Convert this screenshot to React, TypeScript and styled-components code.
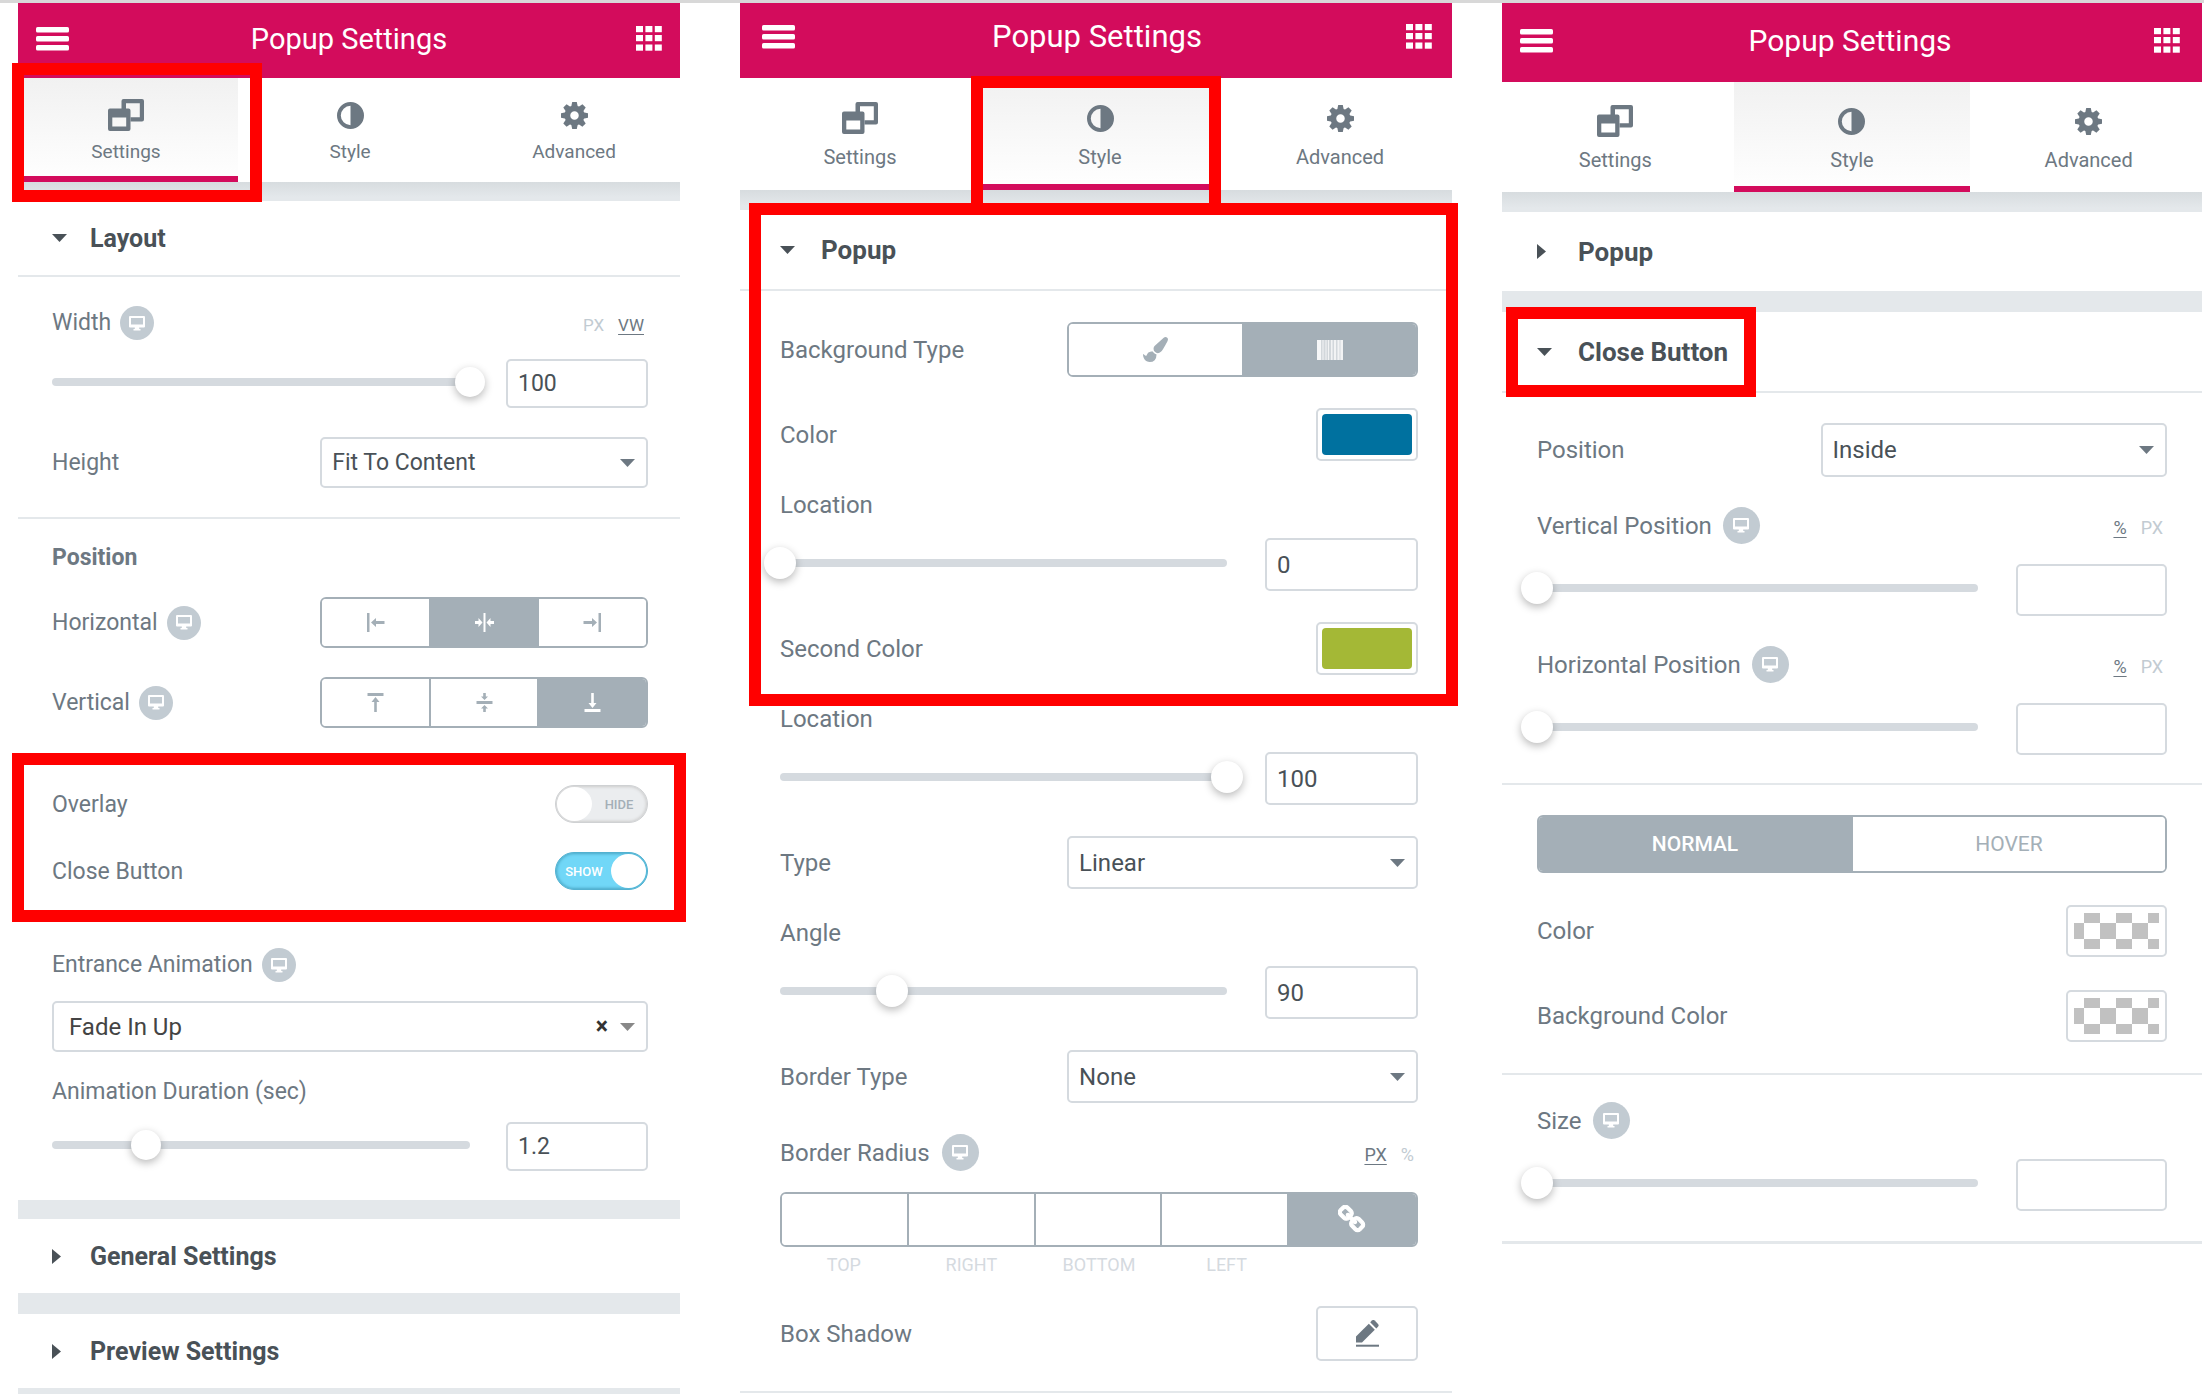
import React, { useId, useState } from 'react';
import styled, { createGlobalStyle, css, ThemeProvider } from 'styled-components';

interface Scale {
  title: number;
  tab: number;
  body: number;
  heading: number;
  unit: number;
  headerHeight: number;
  headerLift: number;
  headerLeft: number;
  headerRight: number;
  tabsHeight: number;
  tabsBleed: string;
  tabsPad: number;
  tabsGap: number;
  glyph: number;
  strip: number;
  sectionHeight: number;
  caretWidth: number;
  padLeft: number;
  padRight: number;
  control: number;
  select: number;
  segment: number;
  badge: number;
  badgeGap: number;
  label: number;
  labelGap: number;
  sliderGap: number;
  inputWidth: number;
  thumb: number;
}

declare module 'styled-components' {
  export interface DefaultTheme extends Scale {}
}

const settingsScale: Scale = {
  title: 29, tab: 19, body: 23, heading: 25, unit: 17,
  headerHeight: 75, headerLift: 4, headerLeft: 18, headerRight: 18,
  tabsHeight: 104, tabsBleed: '0 -6px 0 -4px', tabsPad: 21, tabsGap: 9, glyph: 32,
  strip: 19, sectionHeight: 74, caretWidth: 38,
  padLeft: 34, padRight: 32,
  control: 49, select: 51, segment: 51, badge: 34, badgeGap: 9, label: 23, labelGap: 19,
  sliderGap: 36, inputWidth: 142, thumb: 30,
};

const styleScale: Scale = {
  title: 31, tab: 20, body: 24, heading: 26, unit: 18,
  headerHeight: 75, headerLift: 8, headerLeft: 22, headerRight: 20,
  tabsHeight: 112, tabsBleed: '0 -8px 0 0', tabsPad: 23, tabsGap: 10, glyph: 34,
  strip: 20, sectionHeight: 79, caretWidth: 41,
  padLeft: 40, padRight: 34,
  control: 53, select: 53, segment: 55, badge: 37, badgeGap: 12, label: 25, labelGap: 21,
  sliderGap: 38, inputWidth: 153, thumb: 32,
};

const closeScale: Scale = {
  ...styleScale,
  title: 30,
  headerHeight: 79, headerLift: 4, headerLeft: 18, headerRight: 22,
  tabsHeight: 110, tabsBleed: '0 -5px', tabsPad: 22,
  padLeft: 35, padRight: 35,
  control: 52, select: 54, segment: 58, badgeGap: 11, labelGap: 20,
  inputWidth: 151,
};

const pink = '#d30c5c';
const slate = '#6d7882';
const ink = '#495157';
const steel = '#a4afb7';
const line = '#d5dadf';
const rule = '#e4e8eb';

const GlobalStyle = createGlobalStyle`
  *, *::before, *::after { box-sizing: border-box; }
  body { margin: 0; background: #fff; font-family: Roboto, "Liberation Sans", sans-serif; }
  button, input, select { font: inherit; color: inherit; margin: 0; }
  button { cursor: pointer; background: none; border: 0; padding: 0; }
`;

const Page = styled.main`
  display: flex;
  align-items: flex-start;
  padding: 0 2px 0 18px;
  border-top: 3px solid #d8d8d8;
  overflow-x: clip;
`;

const PanelBox = styled.section<{ $grow: number; $before: number }>`
  flex: ${p => p.$grow} 1 0;
  min-width: 0;
  margin-left: ${p => p.$before}px;
  color: ${slate};
  font-size: ${p => p.theme.body}px;
`;

const Header = styled.header`
  display: grid;
  grid-template-columns: 1fr auto 1fr;
  align-items: center;
  height: ${p => p.theme.headerHeight}px;
  padding: 0 ${p => p.theme.headerRight}px ${p => p.theme.headerLift}px ${p => p.theme.headerLeft}px;
  background: ${pink};
  color: #fff;
  button { display: flex; }
  button:last-child { justify-self: end; }
`;

const Title = styled.h1`
  margin: 0;
  font-size: ${p => p.theme.title}px;
  font-weight: 400;
  line-height: 40px;
`;

const Tabs = styled.nav`
  display: grid;
  grid-template-columns: repeat(3, 1fr);
  height: ${p => p.theme.tabsHeight}px;
  margin: ${p => p.theme.tabsBleed};
`;

const Tab = styled.button<{ $active: boolean }>`
  position: relative;
  display: flex;
  flex-direction: column;
  align-items: center;
  gap: ${p => p.theme.tabsGap}px;
  padding-top: ${p => p.theme.tabsPad}px;
  font-size: ${p => p.theme.tab}px;
  line-height: 24px;
  ${p => p.$active && css`
    background: linear-gradient(#f1f1f1, #fff);
    box-shadow: inset 0 -6px ${pink};
  `}
`;

const GlyphBox = styled.span`
  display: flex;
  align-items: center;
  height: ${p => p.theme.glyph}px;
`;

const Strip = styled.div<{ $height?: number; $shaded?: boolean }>`
  height: ${p => p.$height ?? p.theme.strip}px;
  background: ${p => (p.$shaded ? `linear-gradient(#d7dcdf, ${rule} 80%)` : rule)};
`;

const SectionButton = styled.button`
  position: relative;
  display: flex;
  align-items: center;
  width: 100%;
  height: ${p => p.theme.sectionHeight}px;
  padding-left: ${p => p.theme.padLeft}px;
  font-size: ${p => p.theme.heading}px;
  font-weight: 700;
  color: ${ink};
`;

const CaretBox = styled.span`
  display: flex;
  width: ${p => p.theme.caretWidth}px;
`;

const Rule = styled.hr<{ $height?: number }>`
  height: ${p => p.$height ?? 2}px;
  margin: 0;
  border: 0;
  background: ${rule};
`;

const Group = styled.div<{ $top: number; $bottom: number; $gap: number }>`
  position: relative;
  display: flex;
  flex-direction: column;
  gap: ${p => p.$gap}px;
  padding: ${p => p.$top}px ${p => p.theme.padRight}px ${p => p.$bottom}px ${p => p.theme.padLeft}px;
`;

const Marked = styled.div`
  position: relative;
`;

const Highlight = styled.span<{ $inset: string; $width?: number }>`
  position: absolute;
  z-index: 2;
  inset: ${p => p.$inset};
  ${p => p.$width && css`width: ${p.$width}px;`}
  border: 12px solid #f00;
  pointer-events: none;
`;

const Row = styled.div`
  display: flex;
  align-items: center;
  justify-content: space-between;
`;

const Wide = styled.div`
  flex: 0 0 55%;
`;

const Field = styled.div`
  display: flex;
  flex-direction: column;
  gap: ${p => p.theme.labelGap}px;
`;

const LabelRow = styled.div<{ $badge?: boolean }>`
  display: flex;
  align-items: center;
  justify-content: space-between;
  height: ${p => (p.$badge ? p.theme.badge : p.theme.label)}px;
`;

const Name = styled.span`
  display: flex;
  align-items: center;
  gap: ${p => p.theme.badgeGap}px;
  line-height: 28px;
`;

const Badge = styled.button`
  display: flex;
  align-items: center;
  justify-content: center;
  width: ${p => p.theme.badge}px;
  height: ${p => p.theme.badge}px;
  border-radius: 50%;
  background: #c2cbd2;
`;

const Subheading = styled.h2`
  margin: 0;
  font-size: ${p => p.theme.body}px;
  line-height: 20px;
  font-weight: 700;
`;

const Units = styled.span`
  display: flex;
  gap: 14px;
  padding: 4px 4px 0 0;
  font-size: ${p => p.theme.unit}px;
  line-height: 20px;
`;

const Unit = styled.button<{ $on: boolean }>`
  color: ${p => (p.$on ? slate : '#c2cbd2')};
  text-decoration: ${p => (p.$on ? 'underline' : 'none')};
  text-underline-offset: 3px;
`;

const SliderRow = styled.div`
  display: grid;
  grid-template-columns: 1fr ${p => p.theme.inputWidth}px;
  gap: ${p => p.theme.sliderGap}px;
  align-items: center;
`;

const SliderCell = styled.div`
  display: grid;
  align-items: center;
  padding-bottom: 4px;
  & > * { grid-area: 1 / 1; }
`;

const Track = styled.span`
  height: 8px;
  border-radius: 4px;
  background: ${line};
`;

const Range = styled.input`
  appearance: none;
  width: calc(100% + ${p => p.theme.thumb}px);
  height: ${p => p.theme.thumb}px;
  margin-left: -${p => p.theme.thumb / 2}px;
  background: transparent;
  &::-webkit-slider-thumb {
    appearance: none;
    width: ${p => p.theme.thumb}px;
    height: ${p => p.theme.thumb}px;
    border-radius: 50%;
    background: #fff;
    box-shadow: 0 3px 8px rgba(0, 0, 0, 0.28);
  }
`;

const NumberInput = styled.input`
  width: 100%;
  height: ${p => p.theme.control}px;
  padding: 0 10px;
  border: 2px solid ${line};
  border-radius: 5px;
  background: #fff;
  color: ${ink};
`;

const SelectBox = styled.div`
  display: grid;
  align-items: center;
  & > * { grid-area: 1 / 1; }
  & > svg { justify-self: end; margin-right: 13px; pointer-events: none; }
`;

const Select = styled.select<{ $roomy?: boolean }>`
  appearance: none;
  width: 100%;
  height: ${p => p.theme.select}px;
  padding: 0 ${p => (p.$roomy ? 56 : 34)}px 0 ${p => (p.$roomy ? 15 : 10)}px;
  border: 2px solid ${line};
  border-radius: 5px;
  background: #fff;
  color: ${p => (p.$roomy ? '#444' : ink)};
  font-size: ${p => (p.$roomy ? p.theme.body + 1 : p.theme.body)}px;
`;

const Clear = styled.button`
  justify-self: end;
  margin-right: 40px;
  font-size: 23px;
  line-height: 24px;
  font-weight: 700;
  color: #333;
`;

const Segments = styled.div`
  display: flex;
  height: ${p => p.theme.segment}px;
  border: 2px solid ${steel};
  border-radius: 6px;
  overflow: hidden;
`;

const Segment = styled.button<{ $on: boolean }>`
  flex: 1 1 0;
  display: flex;
  align-items: center;
  justify-content: center;
  font-size: 21px;
  background: ${p => (p.$on ? steel : '#fff')};
  color: ${p => (p.$on ? '#fff' : steel)};
  & + & { border-left: 2px solid ${steel}; }
`;

const TextSegment = styled(Segment)`
  font-weight: ${p => (p.$on ? 500 : 400)};
`;

const SwitchBox = styled.span<{ $on: boolean }>`
  position: relative;
  display: flex;
  flex-direction: ${p => (p.$on ? 'row' : 'row-reverse')};
  align-items: center;
  width: 93px;
  height: 38px;
  padding: 1px;
  border: 1px solid ${p => (p.$on ? '#53b1d0' : '#cfd1d3')};
  border-radius: 19px;
  background: ${p => (p.$on ? '#71d7f7' : '#ebedef')};
  box-shadow: inset 0 0 3px 1px ${p => (p.$on ? '#4ba8c6' : '#cdcdcd')};
  font-size: 13px;
  font-weight: 500;
  color: ${p => (p.$on ? '#fff' : steel)};
  &::after {
    content: '';
    flex: none;
    width: 35px;
    height: 34px;
    border-radius: 50%;
    background: #fff;
  }
  input { position: absolute; inset: 0; width: 100%; height: 100%; opacity: 0; cursor: pointer; }
`;

const SwitchText = styled.span`
  flex: 1;
  text-align: center;
`;

const Swatch = styled.input`
  appearance: none;
  width: 102px;
  height: ${p => p.theme.control}px;
  padding: 4px;
  border: 2px solid ${line};
  border-radius: 5px;
  background: #fff;
  &::-webkit-color-swatch-wrapper { padding: 0; }
  &::-webkit-color-swatch { border: 0; border-radius: 4px; }
`;

const EmptySwatch = styled.button`
  width: 101px;
  height: ${p => p.theme.control}px;
  padding: 6px;
  border: 2px solid ${line};
  border-radius: 5px;
  background: repeating-conic-gradient(#c1c1c1 0 25%, #fff 0 50%) -6px -6px / 32px 32px content-box content-box;
`;

const SwatchRow = styled(Row)`
  height: 54px;
`;

const EditButton = styled.button`
  display: flex;
  align-items: center;
  justify-content: center;
  width: 102px;
  height: 55px;
  border: 2px solid ${line};
  border-radius: 5px;
`;

const Sides = styled.div`
  display: grid;
  grid-template-columns: repeat(5, 1fr);
  height: ${p => p.theme.segment}px;
  border: 2px solid ${steel};
  border-radius: 6px;
  overflow: hidden;
`;

const SideInput = styled.input`
  min-width: 0;
  padding: 0 8px;
  border: 0;
  border-right: 2px solid ${steel};
  text-align: center;
`;

const LinkButton = styled.button`
  display: flex;
  align-items: center;
  justify-content: center;
  background: ${steel};
  color: #fff;
`;

const SideLabels = styled.div`
  display: grid;
  grid-template-columns: repeat(5, 1fr);
  margin-top: 8px;
  font-size: 18px;
  line-height: 20px;
  text-align: center;
  color: ${line};
`;

/* ---------- icons ---------- */

const MenuIcon = () => (
  <svg width="33" height="24" viewBox="0 0 33 24" fill="currentColor">
    {[0, 9, 18].map(y => <rect key={y} y={y} width="33" height="5.5" rx="1.6" />)}
  </svg>
);

const AppsIcon = () => (
  <svg width="26" height="25" viewBox="0 0 26 25" fill="currentColor">
    {[0, 9, 18.5].map(y => [0, 9.4, 18.8].map(x => <rect key={`${x}-${y}`} x={x} y={y} width="7" height="6.2" />))}
  </svg>
);

const WindowsIcon = () => (
  <svg width="36" height="32" viewBox="0 0 36 32" fill="currentColor" fillRule="evenodd">
    <path d="M15.5 0H34a2 2 0 0 1 2 2v18.500a2 2 0 0 1-2 2H22.500V18.200H31.800V4.300H18V10H13.500V2a2 2 0 0 1 2-2z" />
    <path d="M2 9.500H20.500a2 2 0 0 1 2 2V30a2 2 0 0 1-2 2H2a2 2 0 0 1-2-2V11.500a2 2 0 0 1 2-2zM4.300 18.500V27.500H18.200V18.500z" />
  </svg>
);

const ContrastIcon = () => (
  <svg width="27" height="27" viewBox="0 0 27 27" fill="currentColor" fillRule="evenodd">
    <path d="M13.500 0a13.500 13.500 0 1 1 0 27a13.500 13.500 0 1 1 0-27zM13.500 3.800a9.700 9.700 0 0 0 0 19.400z" />
  </svg>
);

const GearIcon = () => (
  <svg width="27" height="27" viewBox="-14 -14 28 28" fill="currentColor">
    <circle r="7.400" fill="none" stroke="currentColor" strokeWidth="6" />
    {[0, 45, 90, 135, 180, 225, 270, 315].map(a => (
      <path key={a} d="M-3.400-9L-2.400-14H2.400L3.400-9z" transform={`rotate(${a})`} />
    ))}
  </svg>
);

const Caret = ({ open, color }: { open: boolean; color?: string }) =>
  open ? (
    <svg width="15" height="8" viewBox="0 0 15 8" fill={color ?? 'currentColor'}><path d="M0 0H15L7.500 8z" /></svg>
  ) : (
    <svg width="9" height="15" viewBox="0 0 9 15" fill={color ?? 'currentColor'}><path d="M0 0L9 7.500L0 15z" /></svg>
  );

const MonitorIcon = () => (
  <svg width="16" height="15" viewBox="0 0 16 15" fill="#fff" fillRule="evenodd">
    <path d="M1 0H15a1 1 0 0 1 1 1V10.500a1 1 0 0 1-1 1H10.200V13H11.500V14.500H4.500V13H5.800V11.500H1a1 1 0 0 1-1-1V1a1 1 0 0 1 1-1zM2 2V8.500H14V2z" />
  </svg>
);

const glyphs: Record<string, React.ReactNode> = {
  left: <path d="M1 0H3.500V19H1zM5 9.500L10 5V8H18.500V11H10V14z" />,
  center: <path d="M8.500 0H10.500V19H8.500zM7.500 9.500L3.500 5V8H0V11H3.500V14zM11.500 9.500L15.500 5V8H19V11H15.500V14z" />,
  right: <path d="M15.500 0H18V19H15.500zM14 9.500L9 5V8H.5V11H9V14z" />,
  top: <path d="M1.500 0H17.500V3H1.500zM9.500 4L13.500 9H10.800V19H8.200V9H5.500z" />,
  middle: <path d="M1.500 8H17.500V11H1.500zM9.500 7L13 3.500H10.800V0H8.200V3.500H6zM9.500 12L13 15.500H10.800V19H8.200V15.500H6z" />,
  bottom: <path d="M1.500 16H17.500V19H1.500zM9.500 15L13.500 10H10.800V0H8.200V10H5.500z" />,
};

const AlignIcon = ({ kind }: { kind: string }) => (
  <svg width="19" height="19" viewBox="0 0 19 19" fill="currentColor">{glyphs[kind]}</svg>
);

const BrushIcon = () => (
  <svg width="25" height="25" viewBox="0 0 1792 1792" fill="currentColor">
    <path d="M1615 0q70 0 122.500 46.500t52.500 116.500q0 63-45 151-332 629-465 752-97 91-218 91-126 0-216.500-92.500t-90.500-219.500q0-128 92-212l638-579q59-54 130-54zm-909 1034q39 76 106.500 130t150.500 76l1 71q4 213-129.500 347t-348.500 134q-123 0-218-46.500t-152.500-127.500-86.500-183-29-220q7 5 41 30t62 44.500 59 36.500 46 17q41 0 55-37 25-66 57.500-112.500t69.500-76 88-47.500 103-25.500 125-10.500z" />
  </svg>
);

const GradientIcon = () => (
  <svg width="26" height="20" viewBox="0 0 26 20" fill="#fff">
    <rect width="26" height="20" opacity=".5" />
    <rect width="4" height="20" opacity=".8" />
    {[[5.5, 1], [8.5, 1], [11, 1], [14, 1.5], [17, 2], [20.5, 2], [23.5, 2.5]].map(([x, w]) => (
      <rect key={x} x={x} width={w} height="20" opacity=".7" />
    ))}
  </svg>
);

const ChainIcon = () => (
  <svg width="29" height="29" viewBox="0 0 1792 1792" fill="currentColor" stroke="currentColor" strokeWidth="70">
    <path d="M1456 1216q0-40-28-68l-208-208q-28-28-68-28-42 0-72 32 3 3 19 18.500t21.500 21.500 15 19 13 25.500 3.500 27.500q0 40-28 68t-68 28q-15 0-27.500-3.500t-25.500-13-19-15-21.500-21.500-18.500-19q-33 31-33 73 0 40 28 68l206 207q27 27 68 27 40 0 68-26l147-146q28-28 28-67zm-703-705q0-40-28-68l-206-207q-28-28-68-28-39 0-68 27l-147 146q-28 28-28 67 0 40 28 68l208 208q27 27 68 27 42 0 72-31-3-3-19-18.500t-21.500-21.500-15-19-13-25.500-3.500-27.500q0-40 28-68t68-28q15 0 27.500 3.500t25.500 13 19 15 21.500 21.500 18.500 19q33-31 33-73zm895 705q0 120-85 203l-147 146q-83 83-203 83-121 0-204-85l-206-207q-83-83-83-203 0-123 88-209l-88-88q-86 88-208 88-120 0-204-84l-208-208q-84-84-84-204t85-203l147-146q83-83 203-83 121 0 204 85l206 207q83 83 83 203 0 123-88 209l88 88q86-88 208-88 120 0 204 84l208 208q84 84 84 204z" />
  </svg>
);

const PencilIcon = () => (
  <svg width="23" height="27" viewBox="0 0 23 27" fill="currentColor">
    <path d="M0 16.500L12.800 3.700L18.800 9.700L6 22.500H0z" />
    <path d="M14.200 2.300L15.900 .6a2 2 0 0 1 2.800 0L22 3.900a2 2 0 0 1 0 2.800L20.300 8.400z" />
    <path d="M0 24.700H23V26.700H0z" />
  </svg>
);

/* ---------- controls ---------- */

const Responsive = () => (
  <Badge type="button" aria-label="Desktop"><MonitorIcon /></Badge>
);

const UnitPicker = ({ units, initial }: { units: string[]; initial: string }) => {
  const [unit, setUnit] = useState(initial);
  return (
    <Units>
      {units.map(u => <Unit key={u} type="button" $on={u === unit} onClick={() => setUnit(u)}>{u}</Unit>)}
    </Units>
  );
};

interface SliderProps {
  label: string;
  initial: string;
  min?: number;
  max?: number;
  step?: number;
  responsive?: boolean;
  units?: string[];
  unit?: string;
}

const Slider = ({ label, initial, min = 0, max = 100, step = 1, responsive, units, unit }: SliderProps) => {
  const id = useId();
  const [value, setValue] = useState(initial);
  return (
    <Field>
      <LabelRow $badge={responsive}>
        <Name><label htmlFor={id}>{label}</label>{responsive && <Responsive />}</Name>
        {units && <UnitPicker units={units} initial={unit ?? units[0]} />}
      </LabelRow>
      <SliderRow>
        <SliderCell>
          <Track />
          <Range
            type="range" aria-label={label} min={min} max={max} step={step}
            value={value === '' ? min : value} onChange={e => setValue(e.target.value)}
          />
        </SliderCell>
        <NumberInput id={id} inputMode="decimal" value={value} onChange={e => setValue(e.target.value)} />
      </SliderRow>
    </Field>
  );
};

const SelectRow = ({ label, options }: { label: string; options: string[] }) => {
  const id = useId();
  return (
    <Row>
      <label htmlFor={id}>{label}</label>
      <Wide>
        <SelectBox>
          <Select id={id}>{options.map(o => <option key={o}>{o}</option>)}</Select>
          <Caret open color={slate} />
        </SelectBox>
      </Wide>
    </Row>
  );
};

const Choice = ({ items, initial }: { items: { key: string; icon: React.ReactNode }[]; initial: string }) => {
  const [on, setOn] = useState(initial);
  return (
    <Segments>
      {items.map(i => (
        <Segment key={i.key} type="button" aria-label={i.key} $on={on === i.key} onClick={() => setOn(i.key)}>
          {i.icon}
        </Segment>
      ))}
    </Segments>
  );
};

const AlignRow = ({ label, kinds, initial }: { label: string; kinds: string[]; initial: string }) => (
  <Row>
    <Name>{label}<Responsive /></Name>
    <Wide><Choice items={kinds.map(k => ({ key: k, icon: <AlignIcon kind={k} /> }))} initial={initial} /></Wide>
  </Row>
);

const ToggleRow = ({ label, initial }: { label: string; initial: boolean }) => {
  const id = useId();
  const [on, setOn] = useState(initial);
  return (
    <Row>
      <label htmlFor={id}>{label}</label>
      <SwitchBox $on={on}>
        <input id={id} type="checkbox" checked={on} onChange={e => setOn(e.target.checked)} />
        <SwitchText>{on ? 'SHOW' : 'HIDE'}</SwitchText>
      </SwitchBox>
    </Row>
  );
};

const ColorRow = ({ label, initial }: { label: string; initial: string }) => {
  const id = useId();
  return (
    <Row>
      <label htmlFor={id}>{label}</label>
      <Swatch id={id} type="color" defaultValue={initial} />
    </Row>
  );
};

const EmptyColorRow = ({ label }: { label: string }) => {
  const id = useId();
  return (
    <SwatchRow>
      <label htmlFor={id}>{label}</label>
      <EmptySwatch id={id} type="button" />
    </SwatchRow>
  );
};

const SectionHead = ({ title, open = false, children }: { title: string; open?: boolean; children?: React.ReactNode }) => (
  <>
    <SectionButton type="button" aria-expanded={open}>
      <CaretBox><Caret open={open} /></CaretBox>
      {title}
      {children}
    </SectionButton>
    {open && <Rule />}
  </>
);

interface PanelProps {
  scale: Scale;
  grow: number;
  before?: number;
  active: string;
  mark?: string;
  children: React.ReactNode;
}

const Panel = ({ scale, grow, before = 0, active, mark, children }: PanelProps) => (
  <ThemeProvider theme={scale}>
    <PanelBox $grow={grow} $before={before}>
      <Header>
        <button type="button" aria-label="Menu"><MenuIcon /></button>
        <Title>Popup Settings</Title>
        <button type="button" aria-label="Widgets"><AppsIcon /></button>
      </Header>
      <Tabs>
        {[['Settings', <WindowsIcon />], ['Style', <ContrastIcon />], ['Advanced', <GearIcon />]].map(([name, icon]) => (
          <Tab key={name as string} type="button" $active={name === active}>
            <GlyphBox>{icon}</GlyphBox>
            {name}
            {mark && name === active && <Highlight $inset={mark} />}
          </Tab>
        ))}
      </Tabs>
      <Strip $shaded />
      {children}
    </PanelBox>
  </ThemeProvider>
);

const EntranceField = () => {
  const id = useId();
  const [value, setValue] = useState('Fade In Up');
  return (
    <Field>
      <LabelRow $badge><Name><label htmlFor={id}>Entrance Animation</label><Responsive /></Name></LabelRow>
      <SelectBox>
        <Select id={id} $roomy value={value} onChange={e => setValue(e.target.value)}>
          <option value="">None</option>
          <option>Fade In Up</option>
        </Select>
        <Clear type="button" aria-label="Clear" onClick={() => setValue('')}>×</Clear>
        <Caret open color="#888" />
      </SelectBox>
    </Field>
  );
};

const RadiusField = () => (
  <Field>
    <LabelRow $badge>
      <Name>Border Radius<Responsive /></Name>
      <UnitPicker units={['PX', '%']} initial="PX" />
    </LabelRow>
    <div>
      <Sides>
        {['top', 'right', 'bottom', 'left'].map(s => <SideInput key={s} id={`radius-${s}`} />)}
        <LinkButton type="button" aria-label="Link values"><ChainIcon /></LinkButton>
      </Sides>
      <SideLabels>
        {['top', 'right', 'bottom', 'left'].map(s => <label key={s} htmlFor={`radius-${s}`}>{s.toUpperCase()}</label>)}
      </SideLabels>
    </div>
  </Field>
);

const StateTabs = () => {
  const [on, setOn] = useState('NORMAL');
  return (
    <Segments>
      {['NORMAL', 'HOVER'].map(s => (
        <TextSegment key={s} type="button" $on={on === s} onClick={() => setOn(s)}>{s}</TextSegment>
      ))}
    </Segments>
  );
};

export default function App() {
  return (
    <>
      <GlobalStyle />
      <Page>
        <Panel scale={settingsScale} grow={662} active="Settings" mark="-15px -24px -20px -2px">
          <SectionHead title="Layout" open />
          <Group $top={29} $bottom={29} $gap={29}>
            <Slider label="Width" initial="100" responsive units={['PX', 'VW']} unit="VW" />
            <SelectRow label="Height" options={['Fit To Content', 'Fit To Screen', 'Custom']} />
          </Group>
          <Rule />
          <Group $top={29} $bottom={29} $gap={29}>
            <Subheading>Position</Subheading>
            <AlignRow label="Horizontal" kinds={['left', 'center', 'right']} initial="center" />
            <AlignRow label="Vertical" kinds={['top', 'middle', 'bottom']} initial="bottom" />
          </Group>
          <Rule />
          <Group $top={26} $bottom={29} $gap={29}>
            <ToggleRow label="Overlay" initial={false} />
            <ToggleRow label="Close Button" initial />
            <Highlight $inset="-6px -6px -3px -6px" />
          </Group>
          <Rule />
          <Group $top={27} $bottom={29} $gap={28}>
            <EntranceField />
            <Slider label="Animation Duration (sec)" initial="1.2" min={0.1} max={5} step={0.1} />
          </Group>
          <Strip />
          <SectionHead title="General Settings" />
          <Strip $height={21} />
          <SectionHead title="Preview Settings" />
          <Strip $height={6} />
        </Panel>

        <Panel scale={styleScale} grow={712} before={60} active="Style" mark="-2px -1px -25px -9px">
          <Marked>
            <SectionHead title="Popup" open />
            <Group $top={31} $bottom={0} $gap={31}>
              <Row>
                <span>Background Type</span>
                <Wide>
                  <Choice
                    items={[{ key: 'Classic', icon: <BrushIcon /> }, { key: 'Gradient', icon: <GradientIcon /> }]}
                    initial="Gradient"
                  />
                </Wide>
              </Row>
              <ColorRow label="Color" initial="#00719f" />
              <Slider label="Location" initial="0" />
              <ColorRow label="Second Color" initial="#a4b836" />
            </Group>
            <Highlight $inset="-7px -6px -31px 9px" />
          </Marked>
          <Group $top={31} $bottom={30} $gap={31}>
            <Slider label="Location" initial="100" />
            <SelectRow label="Type" options={['Linear', 'Radial']} />
            <Slider label="Angle" initial="90" max={360} />
            <SelectRow label="Border Type" options={['None', 'Solid', 'Double', 'Dotted', 'Dashed']} />
            <RadiusField />
            <Row>
              <span>Box Shadow</span>
              <EditButton type="button" aria-label="Edit box shadow"><PencilIcon /></EditButton>
            </Row>
          </Group>
          <Rule />
        </Panel>

        <Panel scale={closeScale} grow={700} before={50} active="Style">
          <SectionHead title="Popup" />
          <Strip $height={21} />
          <SectionHead title="Close Button" open>
            <Highlight $inset="-5px auto -6px 4px" $width={250} />
          </SectionHead>
          <Group $top={30} $bottom={28} $gap={30}>
            <SelectRow label="Position" options={['Inside', 'Outside']} />
            <Slider label="Vertical Position" initial="" responsive units={['%', 'PX']} />
            <Slider label="Horizontal Position" initial="" responsive units={['%', 'PX']} />
          </Group>
          <Rule />
          <Group $top={30} $bottom={30} $gap={31}>
            <StateTabs />
            <EmptyColorRow label="Color" />
            <EmptyColorRow label="Background Color" />
          </Group>
          <Rule />
          <Group $top={27} $bottom={30} $gap={30}>
            <Slider label="Size" initial="" responsive />
          </Group>
          <Rule $height={3} />
        </Panel>
      </Page>
    </>
  );
}
